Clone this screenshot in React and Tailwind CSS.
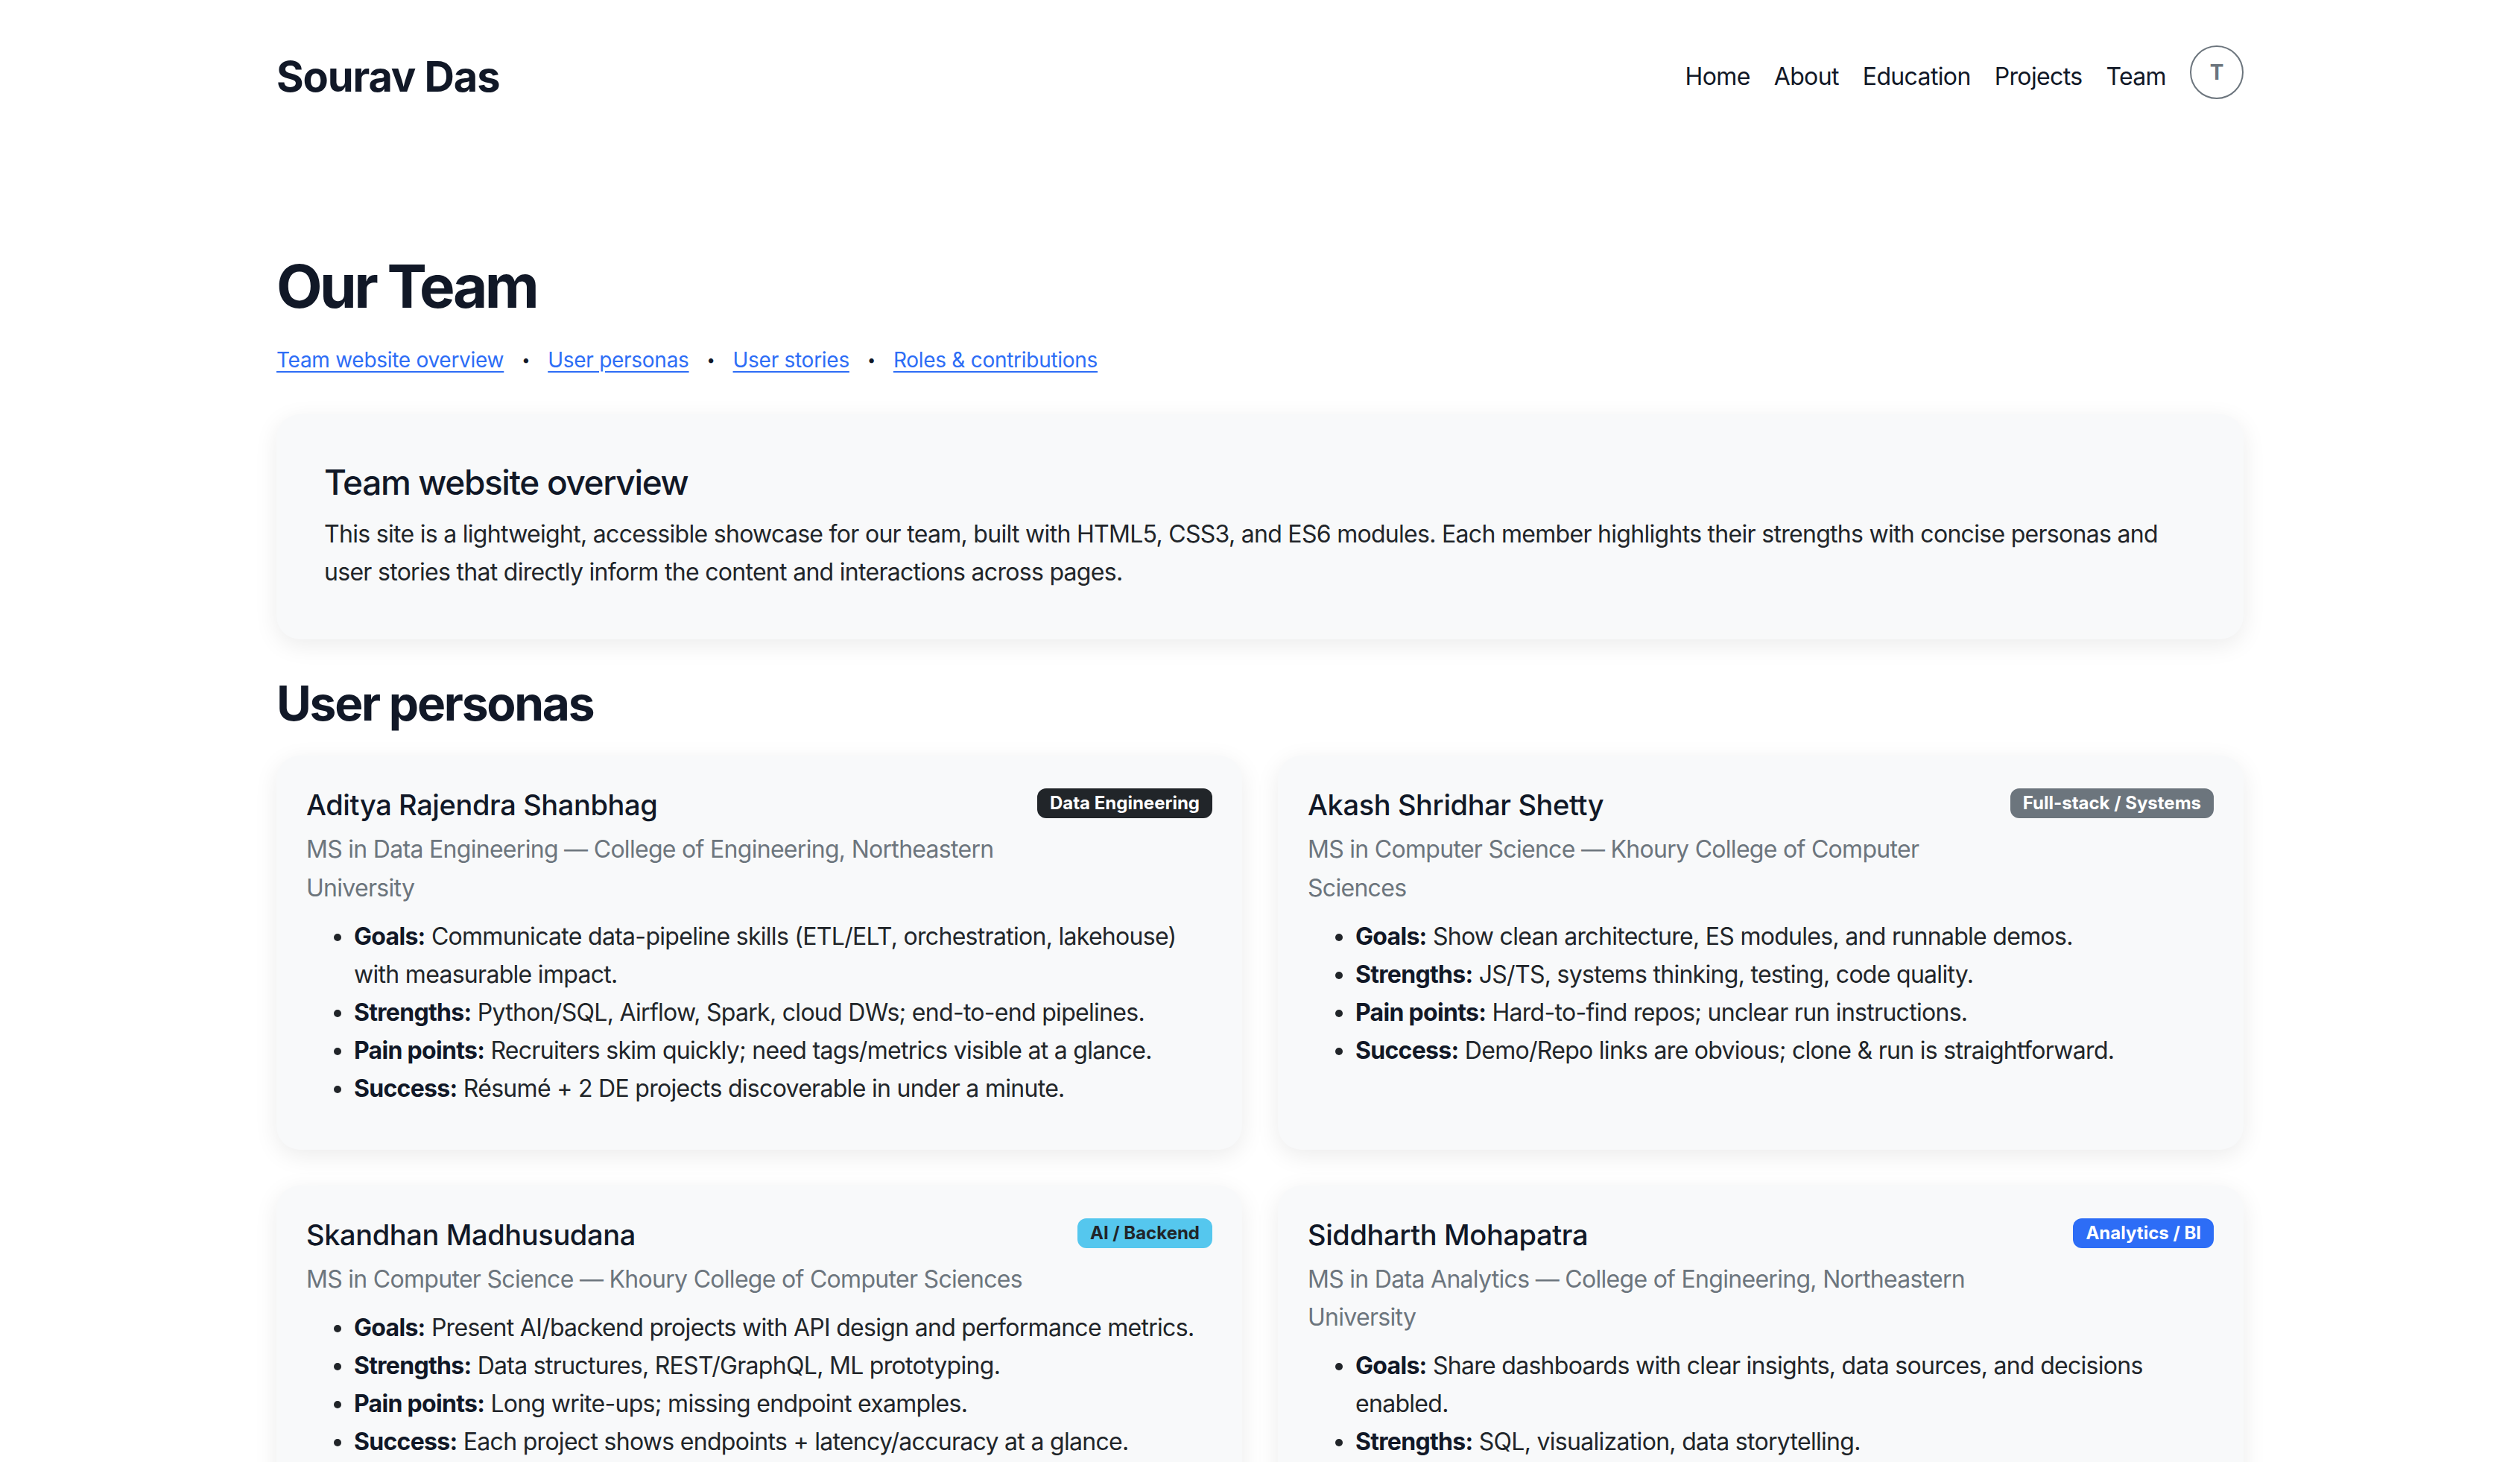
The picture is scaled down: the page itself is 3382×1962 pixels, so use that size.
import React from "react";

const navLinks = ["Home", "About", "Education", "Projects", "Team"];

const sectionLinks = ["Team website overview", "User personas", "User stories", "Roles & contributions"];

const personas = [
  {
    name: "Aditya Rajendra Shanbhag",
    badge: "Data Engineering",
    badgeClass: "bg-[#212529] text-white",
    degree: "MS in Data Engineering — College of Engineering, Northeastern University",
    items: [
      ["Goals:", "Communicate data-pipeline skills (ETL/ELT, orchestration, lakehouse) with measurable impact."],
      ["Strengths:", "Python/SQL, Airflow, Spark, cloud DWs; end-to-end pipelines."],
      ["Pain points:", "Recruiters skim quickly; need tags/metrics visible at a glance."],
      ["Success:", "Résumé + 2 DE projects discoverable in under a minute."],
    ],
  },
  {
    name: "Akash Shridhar Shetty",
    badge: "Full-stack / Systems",
    badgeClass: "bg-[#6c757d] text-white",
    degree: "MS in Computer Science — Khoury College of Computer Sciences",
    items: [
      ["Goals:", "Show clean architecture, ES modules, and runnable demos."],
      ["Strengths:", "JS/TS, systems thinking, testing, code quality."],
      ["Pain points:", "Hard-to-find repos; unclear run instructions."],
      ["Success:", "Demo/Repo links are obvious; clone & run is straightforward."],
    ],
  },
  {
    name: "Skandhan Madhusudana",
    badge: "AI / Backend",
    badgeClass: "bg-[#55c7ee] text-[#212529]",
    degree: "MS in Computer Science — Khoury College of Computer Sciences",
    items: [
      ["Goals:", "Present AI/backend projects with API design and performance metrics."],
      ["Strengths:", "Data structures, REST/GraphQL, ML prototyping."],
      ["Pain points:", "Long write-ups; missing endpoint examples."],
      ["Success:", "Each project shows endpoints + latency/accuracy at a glance."],
    ],
  },
  {
    name: "Siddharth Mohapatra",
    badge: "Analytics / BI",
    badgeClass: "bg-[#2d6df6] text-white",
    degree: "MS in Data Analytics — College of Engineering, Northeastern University",
    items: [
      ["Goals:", "Share dashboards with clear insights, data sources, and decisions enabled."],
      ["Strengths:", "SQL, visualization, data storytelling."],
      ["Pain points:", "Charts without context; unclear metric definitions."],
      ["Success:", "Key KPIs and their business impact are visible at a glance."],
    ],
  },
];

const cardClass =
  "rounded-[32px] bg-[#f8f9fa] shadow-[0_8px_32px_rgba(0,0,0,0.08)]";

const PersonaCard = ({ persona }) => (
  <article className={`${cardClass} p-[40px]`}>
    <div className="flex items-start justify-between gap-[16px]">
      <div className="min-w-0">
        <h3 className="mb-[8px] text-[38px] font-medium leading-[52px] tracking-[-0.01em] text-[#111827]">
          {persona.name}
        </h3>
        <p className="text-[32px] leading-[1.6] tracking-[-0.022em] text-[#6c757d]">{persona.degree}</p>
      </div>
      <span
        className={`mt-[4px] shrink-0 whitespace-nowrap rounded-[12px] px-[17px] py-[8px] text-[24px] font-bold leading-[24px] ${persona.badgeClass}`}
      >
        {persona.badge}
      </span>
    </div>
    <ul className="mt-[14px] mb-[16px] list-disc pl-[64px] text-[32px] leading-[1.6] tracking-[-0.022em] text-[#212529]">
      {persona.items.map(([label, text]) => (
        <li key={label}>
          <strong className="font-bold text-[#111827]">{label}</strong> {text}
        </li>
      ))}
    </ul>
  </article>
);

export default function App() {
  return (
    <div className="min-h-screen bg-white font-['Inter','Liberation_Sans',sans-serif] text-[#212529]">
      <div className="mx-auto max-w-[2640px]">
        <header className="flex h-[206px] items-center justify-between">
          <a className="text-[56px] font-bold leading-none tracking-[-0.02em] text-[#111827]">Sourav Das</a>
          <nav className="flex items-center gap-[32px]">
            {navLinks.map((link) => (
              <a key={link} className="text-[32px] leading-none tracking-[-0.02em] text-[#111827]">
                {link}
              </a>
            ))}
            <button className="mb-[12px] flex h-[72px] w-[72px] items-center justify-center rounded-full border-2 border-[#6c757d] text-[28px] font-bold text-[#6c757d]">
              T
            </button>
          </nav>
        </header>

        <main className="pt-[130px] pb-[120px]">
          <h1 className="text-[80px] font-bold leading-[1.2] tracking-[-0.045em] text-[#111827]">Our Team</h1>

          <div className="mt-[30px] flex items-center text-[28px] leading-[1.5] tracking-[-0.01em]">
            {sectionLinks.map((link, i) => (
              <React.Fragment key={link}>
                {i > 0 && <span className="mx-[24px] text-[20px] text-[#111827]">•</span>}
                <a className="text-[#2d6df6] underline underline-offset-[5px]">{link}</a>
              </React.Fragment>
            ))}
          </div>

          <section className={`${cardClass} mt-[52px] p-[64px]`}>
            <h2 className="mb-[16px] text-[46px] font-medium leading-[1.2] tracking-[-0.03em] text-[#111827]">
              Team website overview
            </h2>
            <p className="text-[32px] leading-[1.6] tracking-[-0.022em]">
              This site is a lightweight, accessible showcase for our team, built with HTML5, CSS3, and ES6 modules.
              Each member highlights their strengths with concise personas and user stories that directly inform the
              content and interactions across pages.
            </p>
          </section>

          <h2 className="mt-[48px] mb-[32px] text-[64px] font-bold leading-[1.2] tracking-[-0.035em] text-[#111827]">
            User personas
          </h2>
          <div className="grid grid-cols-2 gap-[48px]">
            {personas.map((persona) => (
              <PersonaCard key={persona.name} persona={persona} />
            ))}
          </div>

          <h2 className="mt-[64px] mb-[32px] text-[64px] font-bold leading-[1.2] tracking-[-0.035em] text-[#111827]">
            User stories
          </h2>
        </main>
      </div>
    </div>
  );
}
